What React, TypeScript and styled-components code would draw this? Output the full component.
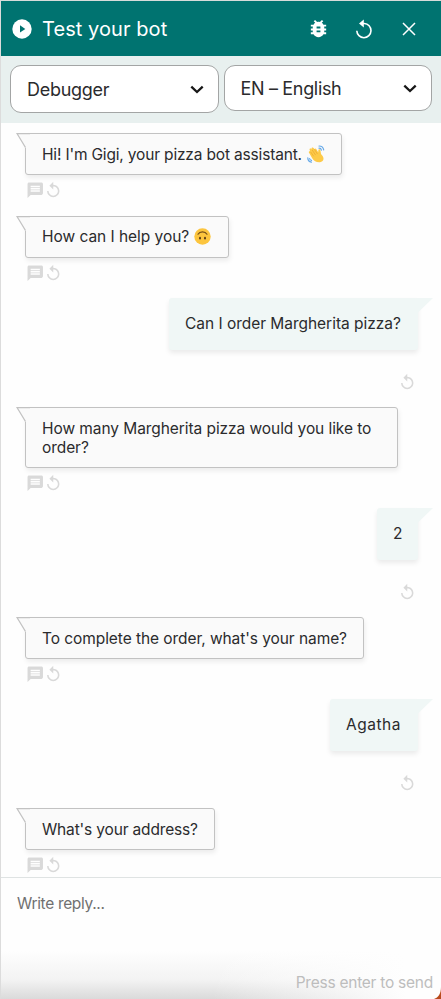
import React from "react";
import styled, { createGlobalStyle } from "styled-components";
import { MdBugReport, MdMessage, MdReplay } from "react-icons/md";

const GlobalStyle = createGlobalStyle`
  * { box-sizing: border-box; }
  body { margin: 0; background: #fff; }
`;

const Panel = styled.main`
  position: relative;
  display: flex;
  flex-direction: column;
  width: 441px;
  height: 999px;
  overflow: hidden;
  border-top: 1px solid #d6dcda;
  border-left: 1px solid #dcdcdc;
  background: #fefefe;
  color: #2b2b2d;
  font-family: Inter, "Open Sans", sans-serif;
`;

const Header = styled.header`
  display: flex;
  align-items: center;
  height: 55px;
  padding: 0 25px 0 11px;
  background: #007370;
  color: #fff;
`;

const Title = styled.h1<{ $spacing: number }>`
  flex: 1;
  margin: 0 0 0 10px;
  font-size: 20px;
  line-height: 28px;
  font-weight: 400;
  letter-spacing: ${(p) => p.$spacing}px;
`;

const HeaderActions = styled.div`
  display: flex;
  align-items: center;
`;

const IconButton = styled.button<{ $gap?: number }>`
  display: flex;
  margin: 0 ${(p) => p.$gap ?? 0}px 0 0;
  padding: 0;
  border: 0;
  background: none;
  color: inherit;
`;

const Toolbar = styled.div`
  display: flex;
  align-items: flex-start;
  gap: 5px;
  height: 67px;
  padding: 9px 9px 0 9px;
  background: #e8f0ef;
`;

const SelectBox = styled.button<{ $height: number; $spacing: number }>`
  display: flex;
  align-items: center;
  justify-content: space-between;
  width: 208.5px;
  height: ${(p) => p.$height}px;
  padding: 1px 14px 0 16px;
  border: 1px solid #a3a5a5;
  border-radius: 11px;
  background: #fff;
  color: #2b2b2d;
  font: 400 18px/24px Inter, sans-serif;
  letter-spacing: ${(p) => p.$spacing}px;
`;

const Conversation = styled.section`
  flex: none;
  height: 754px;
  padding-top: 10.3px;
`;

const Exchange = styled.article<{ $height: number; $own?: boolean }>`
  display: flex;
  flex-direction: column;
  align-items: ${(p) => (p.$own ? "flex-end" : "flex-start")};
  height: ${(p) => p.$height}px;
  padding: ${(p) => (p.$own ? "0 23px 0 0" : "0 0 0 24px")};
`;

const BotBubble = styled.div<{ $width: number; $tall?: boolean }>`
  position: relative;
  display: flex;
  align-items: center;
  width: ${(p) => p.$width}px;
  height: ${(p) => (p.$tall ? 61 : 42)}px;
  padding: 0 0 0 16px;
  border: 1px solid #c2c2c2;
  border-radius: 3px;
  background: #fafafa;
  box-shadow: 1px 3px 5px rgba(0, 0, 0, 0.07);
`;

const UserBubble = styled.div<{ $width: number }>`
  position: relative;
  display: flex;
  align-items: center;
  width: ${(p) => p.$width}px;
  height: 52px;
  padding: 0 0 1px 16px;
  border-radius: 3px;
  background: #f0f7f6;
  box-shadow: 0 3px 5px rgba(0, 0, 0, 0.08);
`;

const BotTail = styled.svg`
  position: absolute;
  left: -10px;
  top: -1px;
`;

const UserTail = styled.svg`
  position: absolute;
  right: -15px;
  top: 0;
`;

const Message = styled.span<{ $spacing?: number }>`
  font-size: 15.5px;
  line-height: 19px;
  white-space: pre;
  letter-spacing: ${(p) => p.$spacing ?? 0}px;
`;

const Emoji = styled.svg`
  flex: none;
  margin-left: 5px;
`;

const MessageActions = styled.div<{ $own?: boolean }>`
  display: flex;
  align-items: center;
  margin-top: ${(p) => (p.$own ? 22.5 : 6)}px;
  padding: ${(p) => (p.$own ? "0 1.5px 0 0" : "0 0 0 0.5px")};
  color: #d9d9d9;
`;

const Composer = styled.footer`
  display: flex;
  flex: 1;
  flex-direction: column;
  justify-content: space-between;
  border-top: 1px solid #dfe3e3;
  padding: 15px 8px 5px 16px;
  background:
    linear-gradient(90deg, rgba(254, 254, 254, 0) 48%, #fefefe 92%),
    linear-gradient(180deg, #fefefe 60%, #f3f3f3 84%, #dadada 100%);
`;

const Placeholder = styled.span<{ $spacing: number }>`
  color: #707070;
  font-size: 15.5px;
  line-height: 22px;
  letter-spacing: ${(p) => p.$spacing}px;
`;

const Hint = styled.span<{ $spacing: number }>`
  align-self: flex-end;
  color: #bdbdbd;
  font-size: 15.5px;
  line-height: 22px;
  letter-spacing: ${(p) => p.$spacing}px;
`;

const WindowCorner = styled.svg`
  position: absolute;
  right: 0;
  bottom: 0;
`;

const EdgeTick = styled.i`
  position: absolute;
  left: -1px;
  top: 521px;
  width: 1px;
  height: 2px;
  background: #333;
`;

const Chevron = () => (
  <svg width="14" height="9" viewBox="0 0 14 9" fill="none">
    <path d="M1.3 1.6 7 7 12.7 1.6" stroke="#171717" strokeWidth="2.3" />
  </svg>
);

const WaveEmoji = () => (
  <Emoji width="18" height="18" viewBox="0 0 18 18">
    <path
      d="M1.9 7.6c-.6-1.1.9-1.9 1.6-.9L2.6 4.9c-.4-1.1 1.2-1.8 1.9-.8l.6.8-.5-1.3c-.3-1.1 1.4-1.6 2-.5l.8 1.2c0-1 1.3-1.2 1.8-.3l2 3.3.2-2.2c.1-1.2 1.9-1.1 2 .1l.6 3.7 1.6 2.1c2.1 3.2.3 6-2.9 6.2-3.2.2-5.8-1.2-7.5-4z"
      fill="#fdca47"
    />
    <path d="m3.5 6.7 3.2 4.6M5.1 4.9l3.5 5.2M7.4 4.3l3.1 4.8" stroke="#e9a52e" strokeWidth=".65" fill="none" />
    <path d="M12 1c2.300 0 4.300 1.600 4.700 3.900M12 3.200c1.200 0 2.200.8 2.400 1.900M.8 12.800c0 2.300 1.400 4 3.600 4.300M2.600 13.500c.1 1 .8 1.700 1.900 1.900" stroke="#66a9e8" strokeWidth="1.2" fill="none" strokeLinecap="round" />
  </Emoji>
);

const UpsideDownEmoji = () => (
  <Emoji width="17" height="17" viewBox="0 0 17 17">
    <circle cx="8.5" cy="8.5" r="8.2" fill="#fcc53e" />
    <path d="M4 6.2C5.8 3 11.2 3 13 6.2" fill="none" stroke="#765019" strokeWidth="1.2" strokeLinecap="round" />
    <ellipse cx="6" cy="10.2" rx="1" ry="1.4" fill="#5f3f18" />
    <ellipse cx="11" cy="10.2" rx="1" ry="1.4" fill="#5f3f18" />
  </Emoji>
);

interface Entry {
  own?: boolean;
  width: number;
  height: number;
  text: string;
  spacing: number;
  tall?: boolean;
  emoji?: React.ReactNode;
}

const entries: Entry[] = [
  { width: 316.5, height: 82.4, text: "Hi! I'm Gigi, your pizza bot assistant.", spacing: -0.17, emoji: <WaveEmoji /> },
  { width: 204, height: 82.4, text: "How can I help you?", spacing: -0.04, emoji: <UpsideDownEmoji /> },
  { own: true, width: 249, height: 109, text: "Can I order Margherita pizza?", spacing: -0.03 },
  { width: 372.5, height: 101.2, text: "How many Margherita pizza would you like to\norder?", spacing: -0.07, tall: true },
  { own: true, width: 41, height: 109, text: "2", spacing: 0 },
  { width: 339, height: 82, text: "To complete the order, what's your name?", spacing: -0.07 },
  { own: true, width: 88, height: 109, text: "Agatha", spacing: 0.5 },
  { width: 190, height: 69, text: "What's your address?", spacing: -0.16 },
];

const ChatEntry = ({ own, width, height, text, spacing, tall, emoji }: Entry) => (
  <Exchange $height={height} $own={own}>
    {own ? (
      <UserBubble $width={width}>
        <Message $spacing={spacing}>{text}</Message>
        <UserTail width="17" height="16" viewBox="0 0 17 16">
          <path d="M0 0h17L2 14.5H0z" fill="#f0f7f6" />
        </UserTail>
      </UserBubble>
    ) : (
      <BotBubble $width={width} $tall={tall}>
        <BotTail width="14" height="16" viewBox="0 0 14 16">
          <path d="M0 0h14v15H9.5z" fill="#fafafa" />
          <path d="M14 .5H1L9.5 14.500" fill="none" stroke="#c2c2c2" strokeWidth="1.3" />
        </BotTail>
        <Message $spacing={spacing}>{text}</Message>
        {emoji}
      </BotBubble>
    )}
    <MessageActions $own={own}>
      {!own && <MdMessage size={18.5} />}
      <MdReplay size={18.5} />
    </MessageActions>
  </Exchange>
);

export default function App() {
  return (
    <>
      <GlobalStyle />
      <Panel>
        <Header>
          <svg width="20" height="20" viewBox="0 0 20 20">
            <circle cx="10" cy="10" r="9.7" fill="#fff" />
            <path d="M8 6.3v7.2l5.3-3.6z" fill="#007370" />
          </svg>
          <Title $spacing={0.07}>Test your bot</Title>
          <HeaderActions>
            <IconButton aria-label="Debug" $gap={25.5}>
              <MdBugReport size={23} />
            </IconButton>
            <IconButton aria-label="Restart" $gap={29}>
              <svg width="18" height="20" viewBox="0 0 18 20" fill="none" stroke="#fff">
                <path d="M7.2 4.500H9.300a7.100 7.100 0 1 1-7.500 7.300" strokeWidth="1.6" />
                <path d="M8.800 .5 4 4.500l4.800 4z" fill="#fff" stroke="none" />
              </svg>
            </IconButton>
            <IconButton aria-label="Close">
              <svg width="14" height="14" viewBox="0 0 14 14" fill="none">
                <path d="m1 1 12 12M13 1 1 13" stroke="#fff" strokeWidth="1.5" />
              </svg>
            </IconButton>
          </HeaderActions>
        </Header>
        <Toolbar>
          <SelectBox $height={48} $spacing={-0.28}>
            Debugger
            <Chevron />
          </SelectBox>
          <SelectBox $height={46} $spacing={-0.33}>
            EN – English
            <Chevron />
          </SelectBox>
        </Toolbar>
        <Conversation>
          {entries.map((entry) => (
            <ChatEntry key={entry.text} {...entry} />
          ))}
        </Conversation>
        <Composer>
          <Placeholder $spacing={-0.33}>Write reply...</Placeholder>
          <Hint $spacing={-0.25}>Press enter to send</Hint>
        </Composer>
        <EdgeTick />
        <WindowCorner width="8" height="12" viewBox="0 0 8 12">
          <path d="M8 0v12H1C5.5 10.500 8 6.500 8 0z" fill="#b94a1c" />
        </WindowCorner>
      </Panel>
    </>
  );
}
